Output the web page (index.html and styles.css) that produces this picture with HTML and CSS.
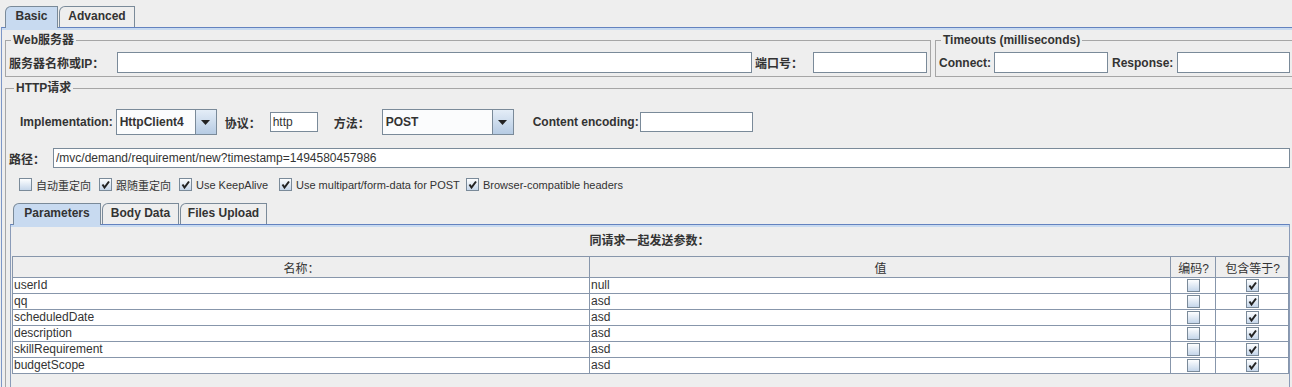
FILE: index.html
```html
<!DOCTYPE html>
<html lang="zh">
<head>
  <meta charset="UTF-8" />
  <meta name="viewport" content="width=device-width, initial-scale=1.0" />
  <title>HTTP请求</title>
  <link rel="stylesheet" href="styles.css">
</head>
<body>
  <div class="tabs main-tabs">
    <div class="tab active w-basic">Basic</div>
    <div class="tab w-advanced">Advanced</div>
  </div>

  <div class="panel main-panel">
    <div class="top-row">
      <fieldset class="group web-group">
        <legend>Web服务器</legend>
        <div class="field-row">
          <label class="lbl mr13">服务器名称或IP：</label>
          <input type="text" class="txt grow" />
          <label class="lbl ml3 mr10">端口号：</label>
          <input type="text" class="txt w-port" />
        </div>
      </fieldset>

      <fieldset class="group timeout-group">
        <legend>Timeouts (milliseconds)</legend>
        <div class="field-row pl3">
          <label class="lbl mr3">Connect:</label>
          <input type="text" class="txt w-port" />
          <label class="lbl ml4 mr4">Response:</label>
          <input type="text" class="txt w-response" />
        </div>
      </fieldset>
    </div>

    <fieldset class="group http-group">
      <legend>HTTP请求</legend>

      <div class="impl-row">
        <label class="lbl mr3">Implementation:</label>
        <div class="combo w-impl">
          <span class="combo-value">HttpClient4</span>
          <span class="combo-btn"><svg width="9" height="5" viewBox="0 0 9 5"><path d="M0 0h9L4.5 5z" fill="#222"/></svg></span>
        </div>
        <label class="lbl ml8 mr9">协议：</label>
        <input type="text" class="txt w-proto" value="http" />
        <label class="lbl ml16 mr12">方法：</label>
        <div class="combo w-method">
          <span class="combo-value">POST</span>
          <span class="combo-btn"><svg width="9" height="5" viewBox="0 0 9 5"><path d="M0 0h9L4.5 5z" fill="#222"/></svg></span>
        </div>
        <label class="lbl ml19 mr1">Content encoding:</label>
        <input type="text" class="txt w-enc" />
      </div>

      <div class="path-row">
        <label class="lbl mr8">路径：</label>
        <input type="text" class="txt grow" value="/mvc/demand/requirement/new?timestamp=1494580457986" />
      </div>

      <div class="check-row">
        <label class="check w80"><span class="cb"></span>自动重定向</label>
        <label class="check w80"><span class="cb"><svg width="11" height="11" viewBox="0 0 11 11"><path d="M2.5 5.5L4.5 8.5L9 2.5" stroke="#222" stroke-width="2" fill="none"/></svg></span>跟随重定向</label>
        <label class="check w100"><span class="cb"><svg width="11" height="11" viewBox="0 0 11 11"><path d="M2.5 5.5L4.5 8.5L9 2.5" stroke="#222" stroke-width="2" fill="none"/></svg></span>Use KeepAlive</label>
        <label class="check w187"><span class="cb"><svg width="11" height="11" viewBox="0 0 11 11"><path d="M2.5 5.5L4.5 8.5L9 2.5" stroke="#222" stroke-width="2" fill="none"/></svg></span>Use multipart/form-data for POST</label>
        <label class="check"><span class="cb"><svg width="11" height="11" viewBox="0 0 11 11"><path d="M2.5 5.5L4.5 8.5L9 2.5" stroke="#222" stroke-width="2" fill="none"/></svg></span>Browser-compatible headers</label>
      </div>

      <div class="tabs inner-tabs">
        <div class="tab active w-params">Parameters</div>
        <div class="tab w-body">Body Data</div>
        <div class="tab w-files">Files Upload</div>
      </div>

      <div class="panel inner-panel">
        <div class="table-title">同请求一起发送参数：</div>
        <table class="params">
          <colgroup>
            <col class="c-name" />
            <col class="c-value" />
            <col class="c-enc" />
            <col class="c-eq" />
          </colgroup>
          <thead>
            <tr><th>名称：</th><th>值</th><th>编码?</th><th>包含等于?</th></tr>
          </thead>
          <tbody>
            <tr>
              <td>userId</td><td>null</td>
              <td class="cb-cell"><span class="cb"></span></td>
              <td class="cb-cell"><span class="cb"><svg width="11" height="11" viewBox="0 0 11 11"><path d="M2.5 5.5L4.5 8.5L9 2.5" stroke="#222" stroke-width="2" fill="none"/></svg></span></td>
            </tr>
            <tr>
              <td>qq</td><td>asd</td>
              <td class="cb-cell"><span class="cb"></span></td>
              <td class="cb-cell"><span class="cb"><svg width="11" height="11" viewBox="0 0 11 11"><path d="M2.5 5.5L4.5 8.5L9 2.5" stroke="#222" stroke-width="2" fill="none"/></svg></span></td>
            </tr>
            <tr>
              <td>scheduledDate</td><td>asd</td>
              <td class="cb-cell"><span class="cb"></span></td>
              <td class="cb-cell"><span class="cb"><svg width="11" height="11" viewBox="0 0 11 11"><path d="M2.5 5.5L4.5 8.5L9 2.5" stroke="#222" stroke-width="2" fill="none"/></svg></span></td>
            </tr>
            <tr>
              <td>description</td><td>asd</td>
              <td class="cb-cell"><span class="cb"></span></td>
              <td class="cb-cell"><span class="cb"><svg width="11" height="11" viewBox="0 0 11 11"><path d="M2.5 5.5L4.5 8.5L9 2.5" stroke="#222" stroke-width="2" fill="none"/></svg></span></td>
            </tr>
            <tr>
              <td>skillRequirement</td><td>asd</td>
              <td class="cb-cell"><span class="cb"></span></td>
              <td class="cb-cell"><span class="cb"><svg width="11" height="11" viewBox="0 0 11 11"><path d="M2.5 5.5L4.5 8.5L9 2.5" stroke="#222" stroke-width="2" fill="none"/></svg></span></td>
            </tr>
            <tr>
              <td>budgetScope</td><td>asd</td>
              <td class="cb-cell"><span class="cb"></span></td>
              <td class="cb-cell"><span class="cb"><svg width="11" height="11" viewBox="0 0 11 11"><path d="M2.5 5.5L4.5 8.5L9 2.5" stroke="#222" stroke-width="2" fill="none"/></svg></span></td>
            </tr>
          </tbody>
        </table>
      </div>
    </fieldset>
  </div>
</body>
</html>
```

FILE: styles.css
```css
* {
  box-sizing: border-box;
}

html, body {
  margin: 0;
  padding: 0;
}

body {
  width: 1300px;
  height: 387px;
  overflow: hidden;
  background: #eeeeee;
  color: #333;
  font-family: "Liberation Sans", Arial, "Noto Sans CJK SC", sans-serif;
  font-size: 12px;
}

/* tabs */
.tabs {
  display: flex;
  align-items: flex-end;
}

.main-tabs {
  height: 27px;
  padding: 6px 0 0 5px;
}

.tab {
  position: relative;
  height: 21px;
  line-height: 19px;
  margin-right: 1px;
  border: 1px solid #7a8a99;
  border-bottom: none;
  border-top-left-radius: 6px;
  background: #eeeeee;
  font-weight: bold;
  text-align: center;
}

.tab.active {
  height: 22px;
  margin-bottom: -1px;
  z-index: 1;
  background: #c8daf0;
}

.w-basic { width: 53px; }
.w-advanced { width: 76px; }
.w-params { width: 88px; }
.w-body { width: 77px; }
.w-files { width: 87px; }

.panel {
  border-top: 1px solid #6382bf;
  box-shadow: inset 0 2px 0 #c8daf0;
}

.main-panel {
  margin-left: 1px;
  border-left: 1px solid #7d97c7;
}

/* titled groups */
.group {
  margin: 0;
  padding: 0;
  min-width: 0;
  border: 1px solid #a6a6a6;
}

.group legend {
  margin-left: 5px;
  padding: 0 2px;
  line-height: 14px;
  font-weight: bold;
}

.top-row {
  display: flex;
  gap: 4px;
  padding-left: 3px;
  margin-top: 5px;
}

.web-group {
  width: 926px;
}

.timeout-group {
  flex: 1;
}

.field-row {
  display: flex;
  align-items: center;
  padding: 5px 3px 3px 3px;
}

.pl3 { padding-left: 3px; }

.lbl {
  font-weight: bold;
  white-space: nowrap;
}

.mr1 { margin-right: 1px; }
.mr3 { margin-right: 3px; }
.mr4 { margin-right: 4px; }
.mr8 { margin-right: 8px; }
.mr9 { margin-right: 9px; }
.mr10 { margin-right: 10px; }
.mr12 { margin-right: 12px; }
.mr13 { margin-right: 13px; }
.ml3 { margin-left: 3px; }
.ml4 { margin-left: 4px; }
.ml8 { margin-left: 8px; }
.ml16 { margin-left: 16px; }
.ml19 { margin-left: 19px; }

.txt {
  height: 21px;
  margin: 0;
  padding: 0 2px;
  border: 1px solid #7a8a99;
  background: #fff;
  color: #333;
  font-family: "Liberation Sans", Arial, sans-serif;
  font-size: 12px;
  outline: none;
}

.grow {
  flex: 1;
  min-width: 0;
}

.w-port { width: 114px; }
.w-response { width: 113px; }
.w-proto { width: 48px; height: 20px; }
.w-enc { width: 113px; height: 20px; }

/* HTTP request */
.http-group {
  margin: 4px 0 0 3px;
  padding: 0 9px 0 3px;
}

.impl-row {
  display: flex;
  align-items: center;
  height: 26px;
  margin-top: 14px;
  padding-left: 11px;
}

.combo {
  display: flex;
  height: 26px;
  border: 1px solid #7a8a99;
  background: #fbfcfd;
}

.w-impl { width: 101px; }
.w-method { width: 132px; }

.combo-value {
  flex: 1;
  padding-left: 3px;
  line-height: 24px;
  font-weight: bold;
}

.combo-btn {
  display: flex;
  align-items: center;
  justify-content: center;
  width: 21px;
  border-left: 1px solid #7a8a99;
  background: linear-gradient(#e4edf7, #b6cbe3);
}

.path-row {
  display: flex;
  align-items: center;
  margin-top: 13px;
}

.path-row .txt {
  height: 20px;
}

.check-row {
  display: flex;
  height: 13px;
  margin-top: 10px;
  padding-left: 10px;
  font-size: 11px;
}

.check {
  display: flex;
  align-items: center;
  gap: 4px;
  white-space: nowrap;
}

.w80 { width: 80px; }
.w100 { width: 100px; }
.w187 { width: 187px; }

.cb {
  display: inline-block;
  width: 13px;
  height: 13px;
  border: 1px solid #7a8a99;
  background: linear-gradient(#fdfeff, #c5d6ea);
  vertical-align: middle;
}

.cb svg {
  display: block;
}

/* parameters */
.inner-tabs {
  margin-top: 12px;
  padding-left: 4px;
}

.inner-panel {
  height: 170px;
  margin-left: 1px;
  padding: 0 2px 0 1px;
  border-left: 1px solid #8a9bb8;
  border-right: 1px solid #8a9bb8;
}

.table-title {
  padding-top: 9px;
  line-height: 14px;
  font-weight: bold;
  text-align: center;
}

.params {
  width: 1276px;
  margin-top: 8px;
  border-collapse: collapse;
  table-layout: fixed;
}

.c-name { width: 577px; }
.c-value { width: 581px; }
.c-enc { width: 45px; }
.c-eq { width: 73px; }

.params th,
.params td {
  padding: 0 0 0 1px;
  border: 1px solid #8796ab;
  font-size: 12px;
  white-space: nowrap;
}

.params th {
  height: 21px;
  background: #eeeeee;
  font-weight: normal;
  text-align: center;
}

.params td {
  height: 16px;
  line-height: 15px;
  background: #fff;
}

.params td.cb-cell {
  padding: 0;
  text-align: center;
}

.params td .cb {
  width: 13px;
  height: 13px;
  vertical-align: top;
  margin-top: 1px;
}
```
